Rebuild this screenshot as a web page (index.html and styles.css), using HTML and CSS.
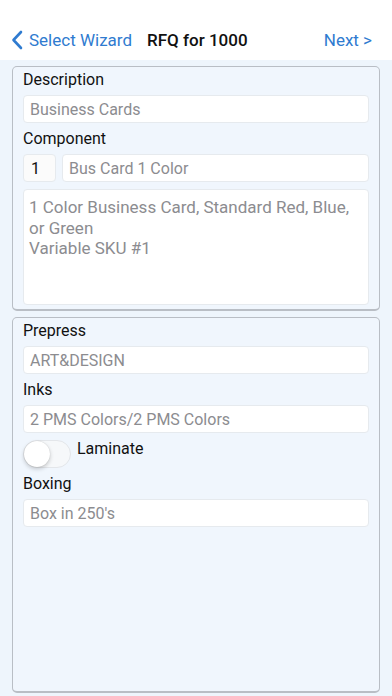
FILE: index.html
```html
<!DOCTYPE html>
<html lang="en">
<head>
  <meta charset="UTF-8" />
  <meta name="viewport" content="width=device-width, initial-scale=1.0"/>
  <title>RFQ for 1000</title>
  <link rel="stylesheet" href="styles.css">
</head>
<body>

<div class="navbar">
  <a class="nav-back" href="#">
    <svg width="12" height="20" viewBox="0 0 12 20"><path d="M10 2 L2.5 10 L10 18" fill="none" stroke="currentColor" stroke-width="2.6" stroke-linecap="round" stroke-linejoin="round"/></svg>
    <span>Select Wizard</span>
  </a>
  <div class="nav-title">RFQ for 1000</div>
  <a class="nav-next" href="#">Next &gt;</a>
</div>

<div class="content">
  <div class="panel">
    <div class="label">Description</div>
    <div class="field">Business Cards</div>

    <div class="label">Component</div>
    <div class="field-row">
      <div class="field qty">1</div>
      <div class="field grow">Bus Card 1 Color</div>
    </div>
    <div class="field notes">1 Color Business Card, Standard Red, Blue, or Green<br>Variable SKU #1</div>
  </div>

  <div class="panel tall">
    <div class="label">Prepress</div>
    <div class="field">ART&amp;DESIGN</div>

    <div class="label">Inks</div>
    <div class="field">2 PMS Colors/2 PMS Colors</div>

    <div class="toggle-row">
      <div class="switch"><div class="knob"></div></div>
      <span>Laminate</span>
    </div>

    <div class="label">Boxing</div>
    <div class="field">Box in 250's</div>
  </div>
</div>

</body>
</html>
```
FILE: styles.css
```css
:root {
  --bg: #eef5fc;
  --panel-bg: #f0f6fd;
  --panel-border: #b9bec5;
  --blue: #2f7bd0;
  --text: #111;
  --muted: #8c8c90;
  --field-border: #e6eaee;
}

body {
  margin: 0;
  background: var(--bg);
  font-family: Roboto, "Liberation Sans", sans-serif;
  color: var(--text);
  height: 696px;
  overflow: hidden;
}

.navbar {
  height: 60px;
  background: #fff;
  display: flex;
  align-items: center;
  padding: 20px 20px 0 11px;
  box-sizing: border-box;
  font-size: 17px;
}

.nav-back {
  display: flex;
  align-items: center;
  gap: 6px;
  color: var(--blue);
  text-decoration: none;
}

.nav-title {
  margin-left: 15px;
  font-weight: 500;
}

.nav-next {
  margin-left: auto;
  color: var(--blue);
  text-decoration: none;
}

.content {
  padding: 6px 12px 0;
  display: flex;
  flex-direction: column;
  gap: 6px;
}

.panel {
  background: var(--panel-bg);
  border: 1.5px solid var(--panel-border);
  border-bottom-width: 2px;
  border-radius: 5px;
  padding: 3px 10px 4px;
}

.panel.tall {
  height: 366px;
}

.label {
  font-size: 16px;
  line-height: 20px;
  margin: 0 0 5px;
}

.field {
  background: #fff;
  border: 1px solid var(--field-border);
  border-radius: 4px;
  height: 28px;
  box-sizing: border-box;
  padding: 0 6px;
  display: flex;
  align-items: center;
  font-size: 16px;
  color: var(--muted);
  margin-bottom: 6px;
}

.field-row {
  display: flex;
  gap: 6px;
}

.field.qty {
  width: 33px;
  color: var(--text);
  background: #fbfbfb;
  padding-left: 7px;
  margin-bottom: 7px;
}

.field.grow {
  flex: 1;
  margin-bottom: 7px;
}

.field.notes {
  height: 116px;
  display: block;
  padding: 7px 5px;
  font-size: 17px;
  line-height: 20.5px;
  margin-bottom: 0;
}

.toggle-row {
  display: flex;
  align-items: flex-start;
  gap: 6px;
  margin: 7px 0 6px;
  font-size: 16px;
}

.toggle-row span {
  margin-top: -1px;
}

.switch {
  width: 48px;
  height: 28px;
  border-radius: 14px;
  border: 1px solid #e3e6ea;
  background: #f6f8fa;
  box-sizing: border-box;
  position: relative;
}

.knob {
  position: absolute;
  left: 0;
  top: 0;
  width: 26px;
  height: 26px;
  border-radius: 50%;
  background: #fff;
  box-shadow: 0 2px 4px rgba(0,0,0,0.2), 0 0 1px rgba(0,0,0,0.2);
}
```
